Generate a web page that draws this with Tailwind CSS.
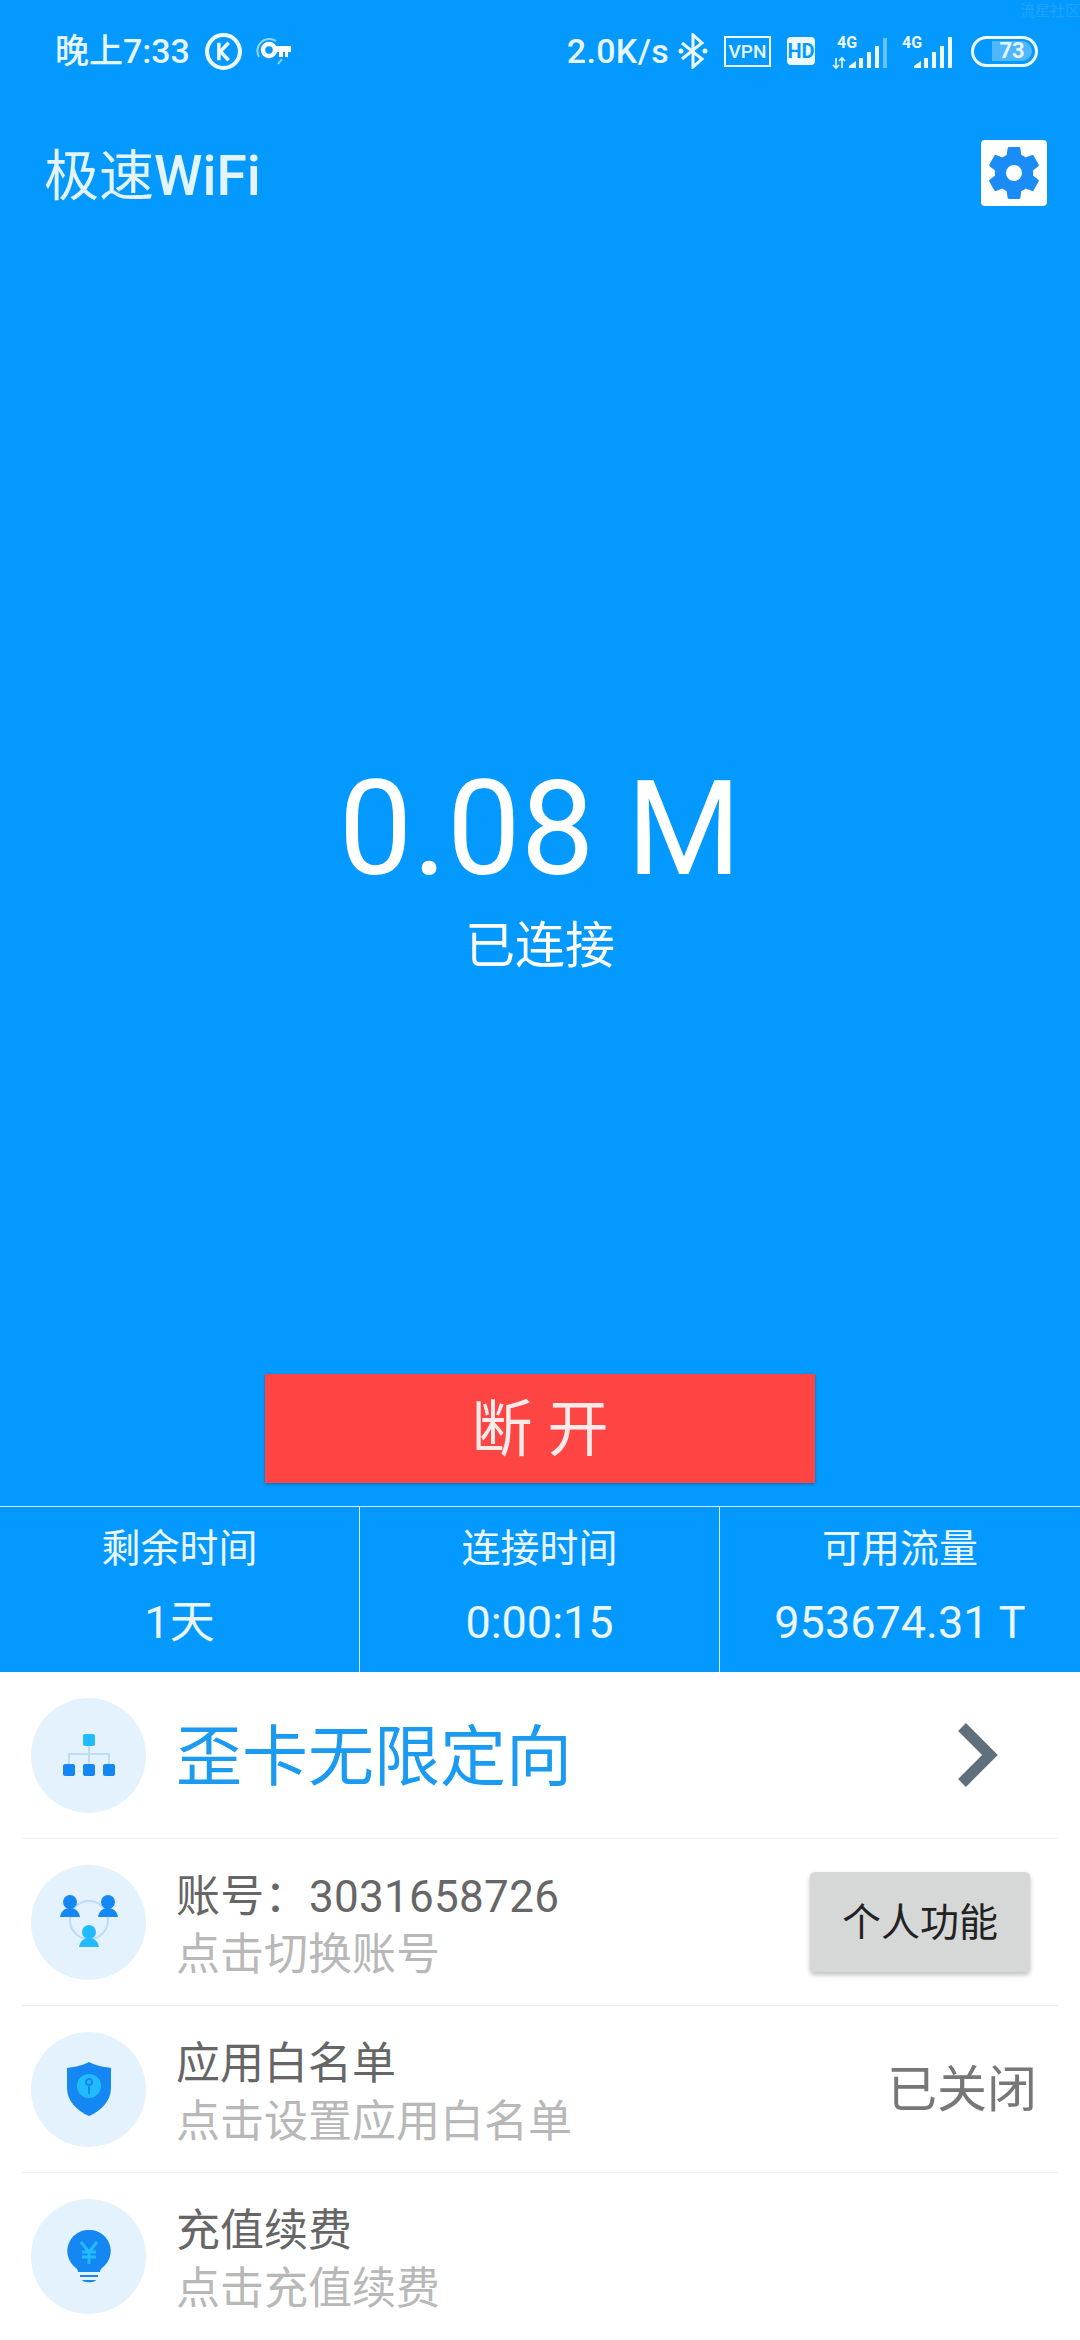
<!DOCTYPE html>
<html lang="zh-CN">
<head>
<meta charset="utf-8">
<script src="https://cdn.jsdelivr.net/npm/@tailwindcss/browser@4"></script>
</head>
<body class="m-0">
<div class="w-[1080px] h-[2340px] overflow-hidden flex flex-col bg-white font-['Roboto','Noto_Sans_CJK_SC',sans-serif]">
  <section class="bg-[#0499ff] h-[1672px] flex flex-col text-white relative">
    <div class="absolute right-0 top-[3px] text-[15px] leading-[16px] text-white/10 whitespace-nowrap">流星社区</div>
    <!-- status bar -->
    <div class="h-[102px] flex items-center justify-between pl-[55px] pr-[42px]">
      <div class="flex items-center text-[34px] text-[#e6f6ff]">
        <span class="font-medium">晚上7:33</span>
        <svg class="ml-[15px]" width="37" height="37" viewBox="0 0 36 36" fill="none"><circle cx="18" cy="18" r="16" stroke="#eef9ff" stroke-width="4"/><path d="M13.5 9.5v17M23 9.5l-8 8.5 8 8.5" stroke="#eef9ff" stroke-width="3.4"/></svg>
        <svg class="ml-[14px]" width="36" height="28" viewBox="0 0 36 28" fill="none"><path d="M3 20A12 12 0 0 1 20 4M26 22l-4 5" stroke="#8fd4ff" stroke-width="2"/><circle cx="13" cy="13" r="6" stroke="#fff" stroke-width="4.5"/><path d="M19 9h16v6h-3v5h-3v-5h-2v5h-4v-5h-4z" fill="#fff"/></svg>
      </div>
      <div class="flex items-center text-[#e6f6ff]">
        <span class="text-[34px] tracking-[0.3px] font-medium">2.0K/s</span>
        <svg class="ml-[9px]" width="30" height="36" viewBox="0 0 30 36" fill="none"><path d="M4 10l20 16-9 8V2l9 8L4 26" stroke="#eef9ff" stroke-width="3"/><circle cx="3" cy="18" r="2.5" fill="#eef9ff"/><circle cx="27" cy="18" r="2.5" fill="#eef9ff"/></svg>
        <div class="ml-[16px] w-[47px] h-[31px] border-[2px] border-[#eef9ff] flex items-center justify-center text-[19px] font-medium leading-none">VPN</div>
        <div class="ml-[16px] w-[28px] h-[28px] rounded-[4px] bg-[#eef9ff] text-[#0499ff] flex items-center justify-center text-[20px] font-bold leading-none">HD</div>
        <svg class="ml-[17px]" width="57" height="38" viewBox="0 0 57 38"><text x="5" y="16" font-size="16" font-weight="700" fill="#eef9ff" font-family="Roboto">4G</text><path d="M4 26v10M1 33l3 3 3-3M10 36V26M7 29l3-3 3 3" stroke="#eef9ff" stroke-width="1.6" fill="none"/><path d="M17 36v-2l7-5v7zM27 36V26h4v10zM35 36V20h4v16zM43 36V14h4v22z" fill="#eef9ff"/><path d="M51 36V6h4v30z" fill="#66c2ff"/></svg>
        <svg class="ml-[13px]" width="53" height="38" viewBox="0 0 53 38"><text x="0" y="16" font-size="16" font-weight="700" fill="#eef9ff" font-family="Roboto">4G</text><path d="M12 36v-2l7-5v7zM22 36V26h4v10zM30 36V20h4v16zM38 36V14h4v22zM46 36V5h4v31z" fill="#eef9ff"/></svg>
        <div class="ml-[16px] w-[67px] h-[31px] rounded-full border-[3px] border-[#eef9ff] flex items-center pl-[18px]">
          <div class="h-[20px] w-[40px] bg-white/30 rounded-r-[10px] flex items-center justify-center text-[22px] font-bold leading-none">73</div>
        </div>
      </div>
    </div>
    <!-- title -->
    <div class="h-[66px] mt-[38px] flex items-center justify-between pl-[44px] pr-[33px]">
      <h1 class="text-[55px] leading-none text-[#e3f4ff] font-normal pt-[6px]">极速<span class="font-medium">WiFi</span></h1>
      <div class="w-[66px] h-[66px] rounded-[4px] bg-white flex items-center justify-center">
        <svg width="50" height="54" viewBox="2.6 2 18.8 20" preserveAspectRatio="none"><path fill="#1a8cf5" d="M19.14 12.94c.04-.3.06-.61.06-.94s-.02-.64-.07-.94l2.03-1.58a.49.49 0 0 0 .12-.61l-1.92-3.32a.49.49 0 0 0-.59-.22l-2.39.96a7 7 0 0 0-1.62-.94l-.36-2.54a.48.48 0 0 0-.48-.41h-3.84a.48.48 0 0 0-.47.41l-.36 2.54c-.59.24-1.13.57-1.62.94l-2.39-.96a.48.48 0 0 0-.59.22L2.74 8.87a.48.48 0 0 0 .12.61l2.03 1.58c-.05.3-.09.63-.09.94s.02.64.07.94l-2.03 1.58a.49.49 0 0 0-.12.61l1.92 3.32c.12.22.37.29.59.22l2.39-.96c.5.38 1.03.7 1.62.94l.36 2.54c.05.24.24.41.48.41h3.84c.24 0 .44-.17.47-.41l.36-2.54c.59-.24 1.13-.56 1.62-.94l2.39.96c.22.08.47 0 .59-.22l1.92-3.32a.48.48 0 0 0-.12-.61zM12 15a3 3 0 1 1 0-6 3 3 0 0 1 0 6z"/></svg>
      </div>
    </div>
    <!-- speed -->
    <div class="flex-1 flex flex-col items-center pt-[548px]">
      <div class="text-[131px] leading-[150px]">0.08 M</div>
      <div class="text-[50px] leading-[60px] mt-[12px]">已连接</div>
    </div>
    <div class="flex justify-center mb-[23px]">
      <div class="w-[550px] h-[109px] bg-[#ff4444] shadow-[0_1px_3px_rgba(0,0,0,0.3)] flex items-center justify-center text-[61px] leading-none text-[#ffeaea] pt-[4px]">断 开</div>
    </div>
    <!-- stats -->
    <div class="h-[166px] grid grid-cols-3 border-t border-white/80">
      <div class="flex flex-col items-center pt-[16px] border-r border-white/80">
        <div class="text-[39px] leading-[52px] text-[#eaf7ff]">剩余时间</div>
        <div class="text-[45px] leading-[52px] mt-[22px] text-[#eaf7ff]">1天</div>
      </div>
      <div class="flex flex-col items-center pt-[16px] border-r border-white/80">
        <div class="text-[39px] leading-[52px] text-[#eaf7ff]">连接时间</div>
        <div class="text-[45px] leading-[52px] mt-[22px] text-[#eaf7ff]">0:00:15</div>
      </div>
      <div class="flex flex-col items-center pt-[16px]">
        <div class="text-[39px] leading-[52px] text-[#eaf7ff]">可用流量</div>
        <div class="text-[45px] leading-[52px] mt-[22px] text-[#eaf7ff]">953674.31 T</div>
      </div>
    </div>
  </section>
  <!-- list -->
  <section class="flex-1 px-[22px] text-[#666666]">
    <div class="h-[167px] border-b border-[#eeeeee] flex items-center">
      <div class="ml-[9px] w-[115px] h-[115px] rounded-full bg-[#e4f2fe] flex items-center justify-center">
        <svg width="56" height="44" viewBox="0 0 56 44"><path d="M28 12v24M8 32V21h40v11" stroke="#bcdcf8" stroke-width="2" fill="none"/><rect x="22" y="1" width="12" height="12" rx="2" fill="#22bbff"/><rect x="2" y="31" width="12" height="12" rx="2" fill="#1587f3"/><rect x="22" y="31" width="12" height="12" rx="2" fill="#1587f3"/><rect x="42" y="31" width="12" height="12" rx="2" fill="#1587f3"/></svg>
      </div>
      <div class="ml-[30px] flex-1 text-[66px] leading-none text-[#1a9af0] pt-[5px]">歪卡无限定向</div>
      <svg class="mr-[59px]" width="42" height="66" viewBox="0 0 42 66"><path d="M5 5l28 28L5 61" stroke="#5f6f7b" stroke-width="11" fill="none"/></svg>
    </div>
    <div class="h-[167px] border-b border-[#eeeeee] flex items-center">
      <div class="ml-[9px] w-[115px] h-[115px] rounded-full bg-[#e4f2fe] flex items-center justify-center">
        <svg width="58" height="54" viewBox="0 0 58 54"><circle cx="29" cy="25" r="19" stroke="#bcdcf8" stroke-width="2" fill="none"/><circle cx="10" cy="7" r="7" fill="#1587f3"/><path d="M0 22c1-6 5-9 10-9s9 3 10 9z" fill="#1587f3"/><circle cx="48" cy="7" r="7" fill="#1587f3"/><path d="M38 22c1-6 5-9 10-9s9 3 10 9z" fill="#1587f3"/><circle cx="29" cy="37" r="7" fill="#22bbff"/><path d="M19 52c1-6 5-9 10-9s9 3 10 9z" fill="#22bbff"/></svg>
      </div>
      <div class="ml-[30px] flex-1 pt-[7px]">
        <div class="text-[44px] leading-[58px] tracking-[0.3px]">账号：3031658726</div>
        <div class="text-[44px] leading-[58px] text-[#b8b8b8]">点击切换账号</div>
      </div>
      <div class="mr-[28px] w-[220px] h-[100px] rounded-[5px] bg-[#d6d7d7] shadow-[0_3px_5px_rgba(0,0,0,0.25)] flex items-center justify-center text-[39px] text-[#222222] pt-[3px]">个人功能</div>
    </div>
    <div class="h-[167px] border-b border-[#eeeeee] flex items-center">
      <div class="ml-[9px] w-[115px] h-[115px] rounded-full bg-[#e4f2fe] flex items-center justify-center">
        <svg width="44" height="54" viewBox="0 0 44 54"><path d="M22 0c5 3 14 5 22 6v20c0 13-10 23-22 28C10 49 0 39 0 26V6c8-1 17-3 22-6z" fill="#1587f3"/><circle cx="22" cy="24" r="12" fill="#22bbff"/><circle cx="22" cy="20" r="3" stroke="#1587f3" stroke-width="2" fill="none"/><path d="M22 23v9" stroke="#1587f3" stroke-width="2"/></svg>
      </div>
      <div class="ml-[30px] flex-1 pt-[7px]">
        <div class="text-[44px] leading-[58px]">应用白名单</div>
        <div class="text-[44px] leading-[58px] text-[#b8b8b8]">点击设置应用白名单</div>
      </div>
      <div class="mr-[21px] text-[50px] text-[#777777] pt-[3px]">已关闭</div>
    </div>
    <div class="h-[167px] flex items-center">
      <div class="ml-[9px] w-[115px] h-[115px] rounded-full bg-[#e4f2fe] flex items-center justify-center">
        <svg width="44" height="54" viewBox="0 0 44 54"><path d="M22 0a21 21 0 0 1 13 38c-1 1-2 2-2 4H11c0-2-1-3-2-4A21 21 0 0 1 22 0z" fill="#1587f3"/><path d="M14 12l8 10 8-10M15 22h14M15 27h14M22 22v12" stroke="#22bbff" stroke-width="3" fill="none"/><path d="M13 45h18v2H13zM15 50h14c-1 3-13 3-14 0z" fill="#1587f3"/></svg>
      </div>
      <div class="ml-[30px] flex-1 pt-[7px]">
        <div class="text-[44px] leading-[58px]">充值续费</div>
        <div class="text-[44px] leading-[58px] text-[#b8b8b8]">点击充值续费</div>
      </div>
    </div>
  </section>
</div>
</body>
</html>
